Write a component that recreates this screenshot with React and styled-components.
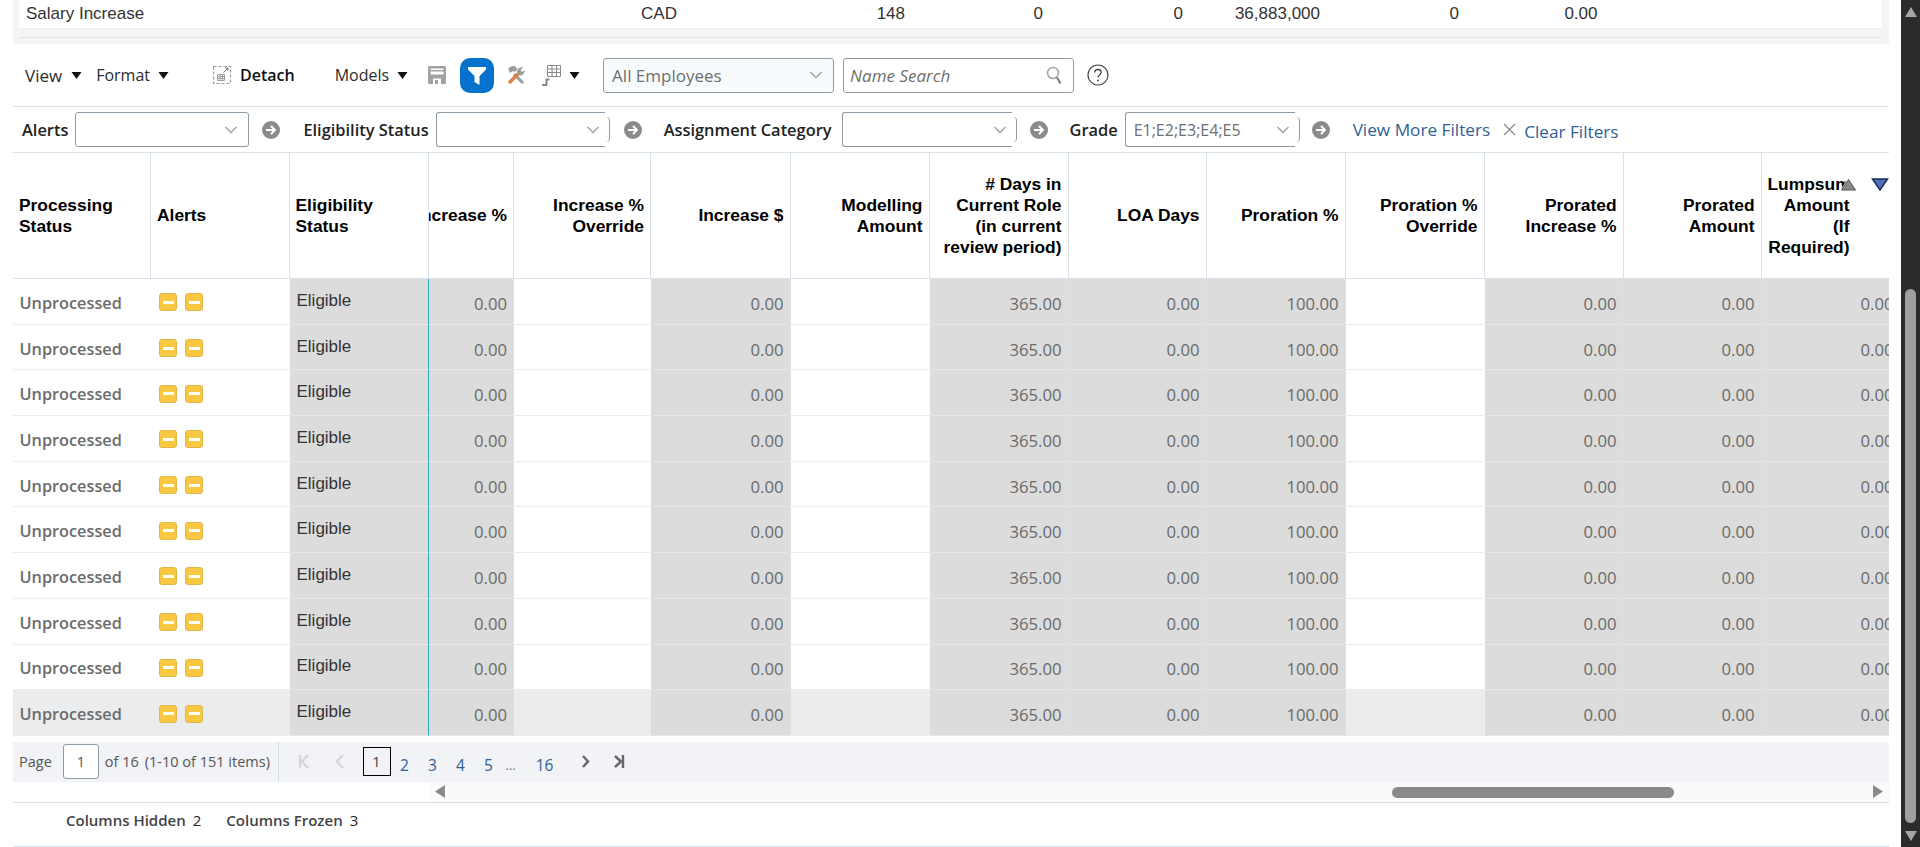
import styled, { createGlobalStyle } from 'styled-components';

const UI_FONT = `"Open Sans", "Noto Sans", sans-serif`;
const ARIAL = `"Liberation Sans", Arial, sans-serif`;

const GlobalStyle = createGlobalStyle`
  html, body {
    margin: 0;
    padding: 0;
    height: 847px;
    overflow: hidden;
    background: #fff;
    font-family: ${UI_FONT};
  }
  * { box-sizing: border-box; }
`;

const Page = styled.div`
  display: flex;
  width: 1920px;
  height: 847px;
  overflow: hidden;
`;

const Main = styled.main`
  width: 1901px;
  padding: 0 12px 0 13px;
`;

/* summary table, only its last row is still in view */
const Summary = styled.section`
  height: 44px;
  background: #f4f4f4;
  padding: 0 7px 0 6px;
`;

const SummaryRow = styled.div`
  display: grid;
  grid-template-columns: 400px 258px 228px 138px 140px 137px 139px 138.5px 1fr;
  align-items: center;
  height: 29px;
  background: #fff;
  border-bottom: 1px solid #eee;
  font: 17px ${ARIAL};
  color: #333;
`;

const SummaryCell = styled.div`
  text-align: ${(p) => (p.$left ? 'left' : 'right')};
  padding-left: ${(p) => (p.$left ? '7px' : '0')};
`;

const SummaryRule = styled.div`
  margin-top: 8px;
  border-top: 1px solid #dde3ea;
`;

const Toolbar = styled.div`
  display: flex;
  align-items: center;
  height: 63px;
  padding-left: 12px;
  border-bottom: 1px solid #d9e2ea;
`;

const MenuItem = styled.div`
  display: flex;
  align-items: center;
  gap: ${(p) => p.$gap || 8}px;
  margin-left: ${(p) => p.$ml || 0}px;
  font-size: ${(p) => p.$fs || 16}px;
  color: ${(p) => (p.$strong ? '#111' : '#2b2b2b')};
  font-weight: ${(p) => (p.$strong ? 600 : 400)};
  white-space: nowrap;
`;

const IconSlot = styled.span`
  display: inline-flex;
  margin-left: ${(p) => p.$ml || 0}px;
`;

const FilterButton = styled.button`
  display: flex;
  align-items: center;
  justify-content: center;
  width: 34px;
  height: 35px;
  margin-left: 14px;
  border: 0;
  padding: 0;
  border-radius: 10px;
  background: #0572ce;
`;

const Field = styled.div`
  position: relative;
  display: flex;
  align-items: center;
  justify-content: space-between;
  width: ${(p) => (p.$notched ? p.$w - 5 : p.$w)}px;
  height: 35px;
  margin-left: ${(p) => p.$ml || 0}px;
  margin-right: ${(p) => (p.$notched ? 5 : 0)}px;
  padding: 0 ${(p) => (p.$notched ? 5 : 10)}px 0 ${(p) => (p.$italic ? 6 : 8)}px;
  border: 1px solid #8d9ba6;
  border-radius: 3px;
  background: ${(p) => p.$bg || '#fff'};
  font-size: ${(p) => p.$fs || 17}px;
  color: #6f6f6f;
  font-style: ${(p) => (p.$italic ? 'italic' : 'normal')};
  white-space: nowrap;

  ${(p) =>
    p.$notched &&
    `
    border-right: 0;
    border-radius: 3px 0 0 3px;
    &::after {
      content: '';
      position: absolute;
      right: -5px;
      top: 4px;
      bottom: 4px;
      width: 4px;
      border-right: 1px solid #8d9ba6;
      border-radius: 0 4px 4px 0;
    }
  `}
`;

const FilterBar = styled.div`
  display: flex;
  align-items: center;
  height: 46px;
  padding-left: 9px;
  border-bottom: 1px solid #d9e2ea;
`;

const FilterLabel = styled.label`
  margin-left: ${(p) => p.$ml || 0}px;
  margin-right: ${(p) => p.$mr || 7}px;
  font-size: 16.4px;
  font-weight: 600;
  color: #222;
  white-space: nowrap;
`;

const FilterLink = styled.a`
  margin-left: ${(p) => p.$ml || 0}px;
  margin-top: ${(p) => p.$mt || 0}px;
  font-size: 17.2px;
  color: #2f6194;
  white-space: nowrap;
`;

const GridWrap = styled.div`
  overflow: hidden;
`;

const Grid = styled.div`
  display: grid;
  width: 1887.5px;
  grid-template-columns: 138px 138.5px 139px 85.5px 137px 139.5px 139px 139px 138px 139px 139px 139px 138px 139px;
  grid-auto-rows: 45.7px;
  grid-template-rows: 126px;
`;

const HeadCell = styled.div`
  position: relative;
  display: flex;
  align-items: center;
  justify-content: ${(p) => (p.$right ? 'flex-end' : 'flex-start')};
  overflow: hidden;
  padding: ${(p) => (p.$pad ? p.$pad : '0 6px')};
  border-bottom: 1px solid #d9e2ea;
  border-right: 1px solid #d9e2ea;
  font: bold 17.4px/21px ${ARIAL};
  color: #000;
  text-align: ${(p) => (p.$right ? 'right' : 'left')};
`;

const HeadText = styled.span`
  flex: none;
  max-width: ${(p) => (p.$clip ? 'none' : `${p.$max || 124}px`)};
  white-space: ${(p) => (p.$clip ? 'nowrap' : 'normal')};
`;

const SortArrows = styled.div`
  position: absolute;
  top: 25px;
  right: 11px;
  display: flex;
  gap: 14px;
`;

const Cell = styled.div`
  display: flex;
  align-items: center;
  justify-content: ${(p) => (p.$right ? 'flex-end' : 'flex-start')};
  padding: ${(p) => (p.$right ? '4px 6px 0 0' : '0 6px')};
  overflow: hidden;
  white-space: nowrap;
  background: ${(p) => (p.$grey ? '#dcdcdc' : p.$hot ? '#ebecee' : '#fff')};
  border-bottom: 1px solid ${(p) => (p.$grey ? '#e6e6e6' : '#ececec')};
  border-right: 1px solid ${(p) => (p.$grey ? '#e0e0e0' : 'transparent')};
  font-size: 16.7px;
  color: #6a6a6a;
`;

const StatusCell = styled(Cell)`
  font-size: 16.3px;
  font-weight: 600;
  color: #6c6c6c;
  padding-top: 3px;
  padding-left: 6.5px;
`;

/* last frozen column, its right edge is the teal freeze line */
const EligibleCell = styled(Cell)`
  font: 17px ${ARIAL};
  color: #333;
  padding-bottom: 1px;
  padding-left: 7px;
  border-right: 1px solid #2aa7bd;
`;

const AlertCell = styled(Cell)`
  gap: 8px;
  padding-top: 2px;
  padding-left: 8px;
`;

const AlertBadge = styled.span`
  display: flex;
  align-items: center;
  justify-content: center;
  width: 18px;
  height: 18px;
  border: 1px solid #e2b64c;
  border-radius: 3px;
  background: #f9c843;

  &::before {
    content: '';
    width: 11px;
    height: 3px;
    background: #fff;
  }
`;

const Pager = styled.nav`
  display: flex;
  align-items: center;
  height: 40px;
  margin-top: 6px;
  background: #f1f3f7;
  font-size: 14.5px;
  color: #555;
`;

const PagerInfo = styled.div`
  display: flex;
  align-items: center;
  height: 100%;
  width: 265.5px;
  padding-left: 6px;
  border-right: 1px solid #d3dee5;
  white-space: nowrap;
`;

const PageInput = styled.div`
  display: flex;
  align-items: center;
  justify-content: center;
  width: 36px;
  height: 35px;
  margin: 0 6px 0 11px;
  border: 1px solid #8d9ba6;
  border-radius: 3px;
  background: #fff;
  color: #555;
`;

const ItemCount = styled.span`
  margin-left: 6px;
`;

const PageLink = styled.a`
  display: flex;
  justify-content: center;
  width: ${(p) => p.$w || 28}px;
  margin-top: 6px;
  font-size: 15.5px;
  color: #2f6194;
`;

const CurrentPage = styled.span`
  display: flex;
  align-items: center;
  justify-content: center;
  width: 28px;
  height: 29px;
  margin: 0 0 0 16px;
  border: 1px solid #000;
  color: #444;
`;

const Ellipsis = styled.span`
  width: 14px;
  margin: 0 14px 0 3px;
  padding-top: 6px;
  font-size: 13px;
  color: #777;
`;

const HScroll = styled.div`
  display: flex;
  align-items: center;
  height: 20px;
  margin-left: 416px;
  padding: 0 6px;
  background: #fafafa;
`;

const HThumb = styled.div`
  width: 284px;
  height: 11px;
  margin: 1px 199px 0 947px;
  border-radius: 6px;
  background: #8a8a8a;
`;

const Footer = styled.footer`
  display: flex;
  align-items: center;
  height: 45px;
  padding-left: 53px;
  padding-bottom: 8px;
  border-top: 1px solid #d9e2ea;
  border-bottom: 1px solid #d9e2ea;
  font-size: 15px;
  color: #222;
`;

const FooterLabel = styled.b`
  margin-left: ${(p) => p.$ml || 0}px;
  margin-right: 7px;
  font-weight: 600;
  color: #444;
`;

const VScroll = styled.aside`
  position: relative;
  display: flex;
  flex-direction: column;
  align-items: center;
  justify-content: space-between;
  width: 19px;
  height: 847px;
  padding: 7px 0 6px;
  background: #2b2b2b;
`;

const VThumb = styled.div`
  position: absolute;
  top: 289px;
  left: 4px;
  width: 11px;
  height: 534px;
  border-radius: 6px;
  background: #9f9f9f;
`;

const Caret = ({ color = '#111', w = 11, h = 7 }) => (
  <svg width={w} height={h} viewBox="0 0 10 7">
    <path d="M0 0h10L5 7z" fill={color} />
  </svg>
);

const Chevron = () => (
  <svg width="14" height="8" viewBox="0 0 14 8" fill="none" stroke="#9aa3aa" strokeWidth="1.4">
    <path d="M1.5 1 7 6.5 12.5 1" />
  </svg>
);

const GoArrow = ({ ml }) => (
  <IconSlot $ml={ml}>
    <svg width="18" height="18" viewBox="0 0 18 18">
      <circle cx="9" cy="9" r="9" fill="#8b8b8b" />
      <path d="M4 9h8M9 5l4 4-4 4" fill="none" stroke="#fff" strokeWidth="2" />
    </svg>
  </IconSlot>
);

const DetachIcon = () => (
  <svg width="19" height="20" viewBox="0 0 19 20" fill="none">
    <rect x=".5" y="1.5" width="17" height="17" stroke="#9a9a9a" strokeWidth="1.200" strokeDasharray="3 2" />
    <path d="M4.500 9.500h7v6h-7zM4.500 11.500h7M4.500 13.500h7M7 9.500v6M9.500 9.500v6" stroke="#8a8a8a" strokeWidth=".8" />
    <path d="M10.500 7.500l4.500-4.500M12 3h3v3" stroke="#777" />
  </svg>
);

const SaveIcon = () => (
  <svg width="18" height="18" viewBox="0 0 18 18">
    <path d="M1.500 0h15A1.500 1.500 0 0 1 18 1.500v15a1.500 1.500 0 0 1-1.500 1.500h-15A1.500 1.500 0 0 1 0 16.500v-15A1.500 1.500 0 0 1 1.500 0z" fill="#a0a3a6" />
    <path d="M2.500 2.500h13v1.500h-13zM2.500 5.500h13v3h-13z" fill="#fff" />
    <path d="M5 12.500h8v5.500H5z" fill="#fff" />
    <path d="M7 14h3v4H7z" fill="#a0a3a6" />
  </svg>
);

const FunnelIcon = () => (
  <svg width="18" height="19" viewBox="0 0 18 19">
    <path d="M0 1h18v2.500l-6.500 6.500v9L6.500 16v-6L0 3.500z" fill="#fff" />
  </svg>
);

const ToolsIcon = () => (
  <svg width="20" height="19" viewBox="0 0 20 19" fill="none">
    <path d="M8 8l9 9" stroke="#9a9da0" strokeWidth="3" />
    <path d="M2 2.500 6 0h3l2.500 3L9 6 7 5 4 7z" fill="#9a9da0" />
    <path d="M12.500 7.500 3 17" stroke="#dc8247" strokeWidth="3.400" />
    <path d="M11 6c0-3 3-5.500 6-4.500L14.500 4l1.500 2 2.500-2c.8 3-2 6-5 5.500z" fill="#9a9da0" />
  </svg>
);

const TableMoveIcon = () => (
  <svg width="20" height="21" viewBox="0 0 20 21" fill="none" stroke="#8a8a8a">
    <path d="M6.500.5h13v11h-13zM6.500 4h13M6.500 7.500h13M11 .5v11M15.500.500v11" />
    <path d="M8.500 14.500H5.500v5.500H1" strokeWidth="2" />
  </svg>
);

const HelpIcon = () => (
  <svg width="22" height="22" viewBox="0 0 22 22" fill="none" stroke="#444">
    <circle cx="11" cy="11" r="10" strokeWidth="1.200" />
    <path d="M7.800 8.500C7.800 6.500 9.300 5.500 11 5.500c1.800 0 3.200 1.100 3.200 2.800 0 2.500-3.200 2.700-3.200 5.200" strokeWidth="1.300" />
    <circle cx="11" cy="16.500" r=".9" fill="#444" stroke="none" />
  </svg>
);

const SearchIcon = () => (
  <svg width="17" height="19" viewBox="0 0 17 19" fill="none">
    <circle cx="7" cy="7" r="5.500" stroke="#a8a8a8" strokeWidth="1.600" />
    <path d="M11 11.500l3.500 6" stroke="#777" strokeWidth="2" />
  </svg>
);

const ClearIcon = () => (
  <svg width="13" height="13" viewBox="0 0 13 13" stroke="#8a8f94" strokeWidth="1.400" style={{ marginLeft: 13 }}>
    <path d="M1 1l11 11M12 1 1 12" />
  </svg>
);

const PagerGlyph = ({ d, color, ml, w = 12 }) => (
  <IconSlot $ml={ml}>
    <svg width={w} height="15" viewBox={`0 0 ${w} 15`} fill="none" stroke={color} strokeWidth="2.400">
      <path d={d} />
    </svg>
  </IconSlot>
);

const SortUp = () => (
  <svg width="17" height="13" viewBox="0 0 17 13">
    <path d="M8.500 0 17 12.500H0z" fill="#fff" />
    <path d="M8.500 1.500 15.500 12H1.500z" fill="#8a8a8a" stroke="#555" />
  </svg>
);

const SortDown = () => (
  <svg width="18" height="13" viewBox="0 0 18 13">
    <path d="M1.500 1h15L9 12z" fill="#4f72b8" stroke="#1c2c55" strokeWidth="1.500" />
  </svg>
);

const Triangle = ({ dir }) => (
  <svg width="10" height="13" viewBox="0 0 10 13">
    <path d={dir === 'left' ? 'M10 0v13L0 6.500z' : 'M0 0v13l10-6.500z'} fill="#8a8a8a" />
  </svg>
);

const VArrow = ({ up }) => (
  <svg width="12" height="10" viewBox="0 0 12 10">
    <path d={up ? 'M6 0l6 10H0z' : 'M0 0h12L6 10z'} fill="#a5a5a5" />
  </svg>
);

const summary = ['CAD', '148', '0', '0', '36,883,000', '0', '0.00'];

const columns = [
  { label: 'Processing Status' },
  { label: 'Alerts' },
  { label: 'Eligibility Status' },
  { label: 'Increase %', right: true, clip: true },
  { label: 'Increase % Override', right: true, blank: true },
  { label: 'Increase $', right: true, value: '0.00' },
  { label: 'Modelling Amount', right: true, blank: true },
  { label: '# Days in Current Role (in current review period)', right: true, value: '365.00', max: 118 },
  { label: 'LOA Days', right: true, value: '0.00' },
  { label: 'Proration %', right: true, value: '100.00' },
  { label: 'Proration % Override', right: true, blank: true },
  { label: 'Prorated Increase %', right: true, value: '0.00' },
  { label: 'Prorated Amount', right: true, value: '0.00' },
  { label: 'Lumpsum Amount (If Required)', right: true, value: '0.00', last: true, max: 82 },
];

const rows = Array.from({ length: 10 }, (_, i) => i);

function App() {
  return (
    <>
      <GlobalStyle />
      <Page>
        <Main>
          <Summary>
            <SummaryRow>
              <SummaryCell $left>Salary Increase</SummaryCell>
              {summary.map((value, i) => (
                <SummaryCell key={i}>{value}</SummaryCell>
              ))}
            </SummaryRow>
            <SummaryRule />
          </Summary>

          <Toolbar>
            <MenuItem $fs={17} $gap={9}>View <Caret /></MenuItem>
            <MenuItem $ml={14}>Format <Caret /></MenuItem>
            <MenuItem $ml={44} $strong><DetachIcon /> Detach</MenuItem>
            <MenuItem $ml={40}>Models <Caret /></MenuItem>
            <IconSlot $ml={20}><SaveIcon /></IconSlot>
            <FilterButton><FunnelIcon /></FilterButton>
            <IconSlot $ml={12}><ToolsIcon /></IconSlot>
            <IconSlot $ml={15}><TableMoveIcon /></IconSlot>
            <IconSlot $ml={8}><Caret /></IconSlot>
            <Field $w={231} $ml={23} $bg="#f8fbfd">All Employees <Chevron /></Field>
            <Field $w={231} $ml={9} $italic>Name Search <SearchIcon /></Field>
            <IconSlot $ml={13}><HelpIcon /></IconSlot>
          </Toolbar>

          <FilterBar>
            <FilterLabel>Alerts</FilterLabel>
            <Field $w={174}><span /><Chevron /></Field>
            <GoArrow ml={13} />
            <FilterLabel $ml={23}>Eligibility Status</FilterLabel>
            <Field $w={174} $notched><span /><Chevron /></Field>
            <GoArrow ml={14} />
            <FilterLabel $ml={22} $mr={10}>Assignment Category</FilterLabel>
            <Field $w={175} $notched><span /><Chevron /></Field>
            <GoArrow ml={13} />
            <FilterLabel $ml={22}>Grade</FilterLabel>
            <Field $w={175} $fs={16} $notched>E1;E2;E3;E4;E5 <Chevron /></Field>
            <GoArrow ml={12} />
            <FilterLink $ml={23}>View More Filters</FilterLink>
            <ClearIcon />
            <FilterLink $ml={8} $mt={3}>Clear Filters</FilterLink>
          </FilterBar>

          <GridWrap>
            <Grid>
              {columns.map((col) => (
                <HeadCell key={col.label} $right={col.right} $pad={col.last ? '0 50px 0 7px' : undefined}>
                  <HeadText $clip={col.clip} $max={col.max}>{col.label}</HeadText>
                  {col.last && (
                    <SortArrows>
                      <SortUp />
                      <SortDown />
                    </SortArrows>
                  )}
                </HeadCell>
              ))}
              {rows.map((row) => {
                const hot = row === rows.length - 1;
                return columns.map((col, i) => {
                  if (i === 0) return <StatusCell key={i} $hot={hot}>Unprocessed</StatusCell>;
                  if (i === 1) {
                    return (
                      <AlertCell key={i} $hot={hot}>
                        <AlertBadge />
                        <AlertBadge />
                      </AlertCell>
                    );
                  }
                  if (i === 2) return <EligibleCell key={i} $grey>Eligible</EligibleCell>;
                  if (i === 3) return <Cell key={i} $grey $right>0.00</Cell>;
                  if (col.blank) return <Cell key={i} $hot={hot} />;
                  return <Cell key={i} $grey $right>{col.value}</Cell>;
                });
              })}
            </Grid>
          </GridWrap>

          <Pager>
            <PagerInfo>
              Page
              <PageInput>1</PageInput>
              of 16
              <ItemCount>(1-10 of 151 items)</ItemCount>
            </PagerInfo>
            <PagerGlyph ml={19} d="M2 1v13M10 1 4 7.500l6 6.500" color="#d4d6d9" />
            <PagerGlyph ml={25} d="M8 1 2 7.500 8 14" color="#d4d6d9" />
            <CurrentPage>1</CurrentPage>
            <PageLink>2</PageLink>
            <PageLink>3</PageLink>
            <PageLink>4</PageLink>
            <PageLink>5</PageLink>
            <Ellipsis>...</Ellipsis>
            <PageLink $w={22}>16</PageLink>
            <PagerGlyph ml={24} d="M3 2l5 5.500L3 13" color="#666" />
            <PagerGlyph ml={22} d="M1 2l6 5.500L1 13M9 1v13" color="#666" />
          </Pager>

          <HScroll>
            <Triangle dir="left" />
            <HThumb />
            <Triangle dir="right" />
          </HScroll>

          <Footer>
            <FooterLabel>Columns Hidden</FooterLabel> 2
            <FooterLabel $ml={25}>Columns Frozen</FooterLabel> 3
          </Footer>
        </Main>

        <VScroll>
          <VArrow up />
          <VThumb />
          <VArrow />
        </VScroll>
      </Page>
    </>
  );
}

export default App;
